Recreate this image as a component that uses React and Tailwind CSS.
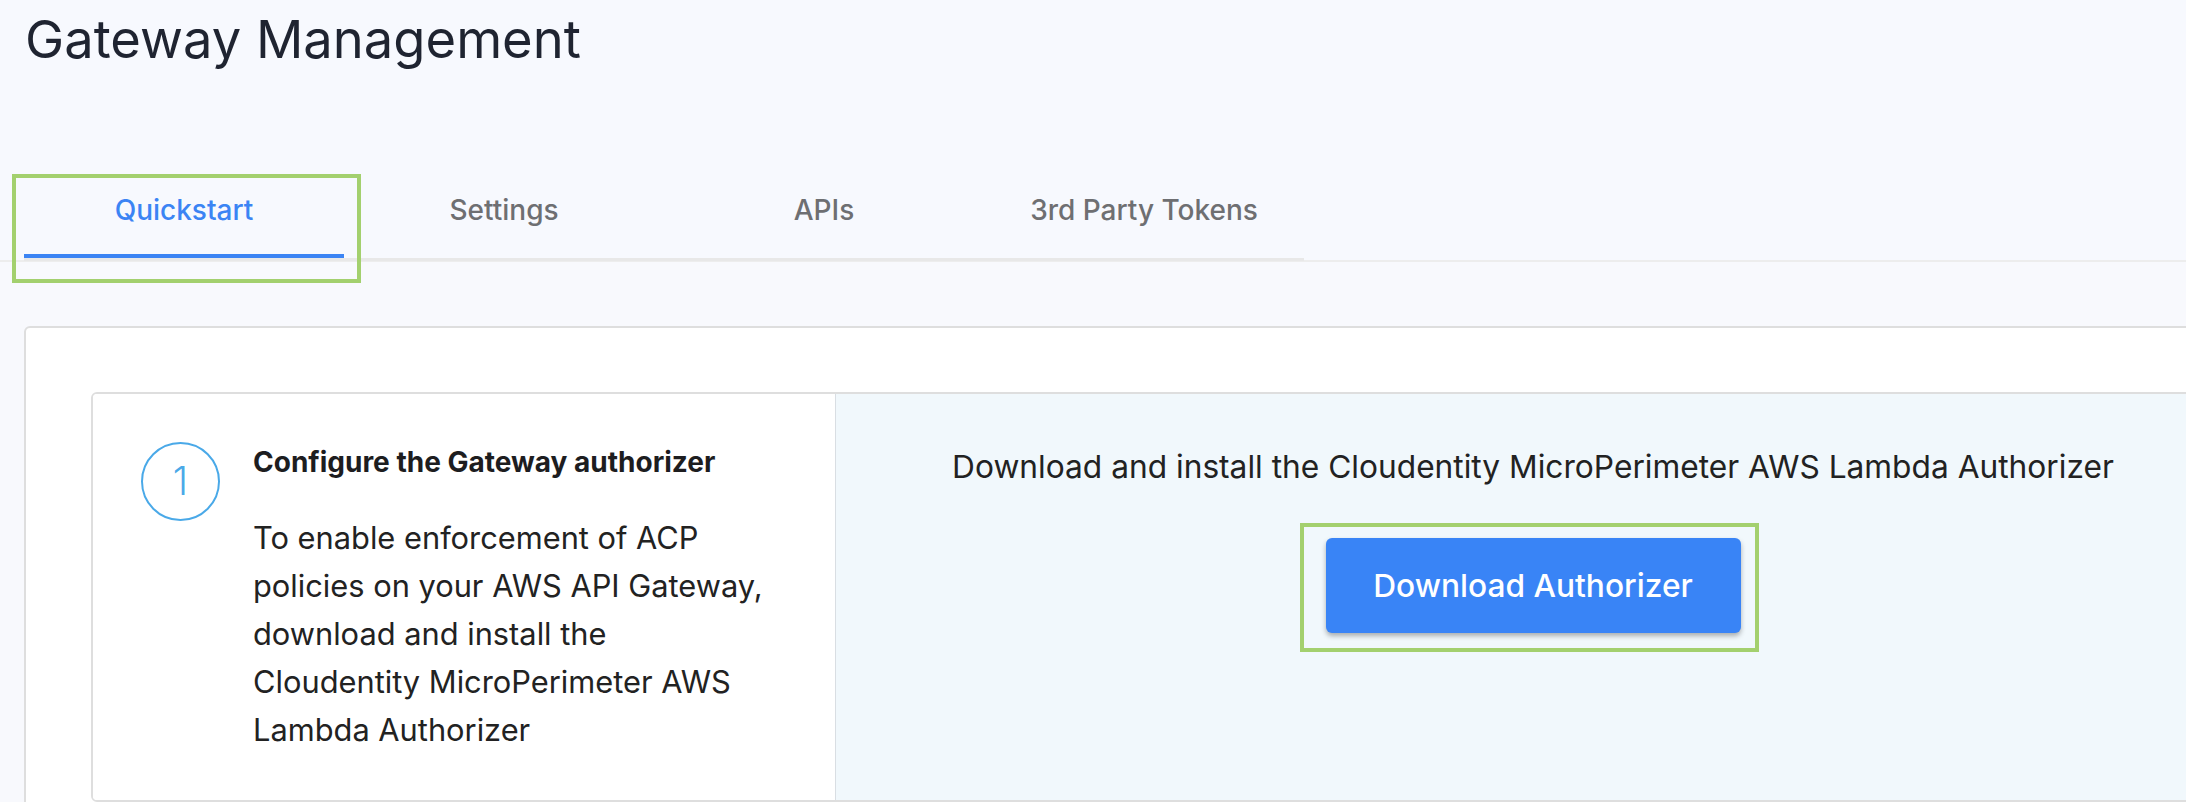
import React from "react";

const tabs = ["Quickstart", "Settings", "APIs", "3rd Party Tokens"];

const stepLines = [
  "To enable enforcement of ACP",
  "policies on your AWS API Gateway,",
  "download and install the",
  "Cloudentity MicroPerimeter AWS",
  "Lambda Authorizer",
];

function Tab({ label, active }) {
  return (
    <div
      className={`relative w-[320px] pt-[34px] pb-[27px] text-center text-[28px] leading-[33px] font-medium border-b-4 ${
        active ? "text-[#3b84f4] border-[#3b84f4]" : "text-[#6e6f72] border-transparent"
      }`}
    >
      {label}
      {active && (
        <div className="absolute left-[-12px] top-[14px] w-[349px] h-[109px] border-4 border-[#a3d06e] pointer-events-none" />
      )}
    </div>
  );
}

export default function App() {
  return (
    <div
      className="min-h-screen w-full overflow-hidden bg-[#f8f9fd] text-[#222]"
      style={{ fontFamily: "Inter, 'Noto Sans', sans-serif" }}
    >
      {/* header */}
      <div className="h-[160px] bg-[#f7f9fe]">
        <h1 className="pl-[25px] pt-[7px] text-[52.5px] leading-[65px] font-normal text-[#1f2431]">
          Gateway Management
        </h1>
      </div>

      {/* tabs */}
      <div className="bg-[#f7f9fe] border-b-2 border-[#ededed]">
        <div className="ml-[24px] w-[1280px] flex border-b-[3px] border-[#e8e8e8] -mb-[1px]">
          {tabs.map((t, i) => (
            <Tab key={t} label={t} active={i === 0} />
          ))}
        </div>
      </div>

      {/* outer card */}
      <div className="mt-[64px] ml-[24px] w-[2300px] h-[600px] bg-white border-2 border-[#dedede] rounded-md pl-[65px] pt-[64px]">
        <div className="flex h-[410px] border-2 border-[#dedede] rounded-md overflow-hidden">
          {/* left */}
          <div className="w-[743px] shrink-0 border-r border-[#d9dee3] bg-white p-12 flex gap-[33px]">
            <div className="w-[79px] h-[79px] shrink-0 rounded-full border-2 border-[#4aa9e8] flex items-center justify-center text-[39px] font-light text-[#4aa9e8]">
              1
            </div>
            <div>
              <h3 className="mt-[5px] text-[28px] leading-[30px] font-bold text-[#1d1d1f] whitespace-nowrap">
                Configure the Gateway authorizer
              </h3>
              <p className="mt-[37px] text-[30.8px] leading-[48px] text-[#222]">
                {stepLines.map((l) => (
                  <span key={l} className="block whitespace-nowrap">
                    {l}
                  </span>
                ))}
              </p>
            </div>
          </div>

          {/* right */}
          <div className="w-[1394px] shrink-0 bg-[#f1f8fc] pt-[55px] flex flex-col items-center">
            <p className="text-[31.7px] leading-[36px] text-[#222] whitespace-nowrap">
              Download and install the Cloudentity MicroPerimeter AWS Lambda Authorizer
            </p>
            <div className="relative mt-[53px]">
              <button className="w-[415px] h-[95px] rounded-md bg-[#3984f6] text-white text-[31.7px] font-medium shadow-[0_3px_5px_rgba(0,0,0,0.3)]">
                Download Authorizer
              </button>
              <div className="absolute left-[-26px] top-[-15px] w-[459px] h-[129px] border-4 border-[#a3d06e] pointer-events-none" />
            </div>
          </div>
        </div>
      </div>
    </div>
  );
}
